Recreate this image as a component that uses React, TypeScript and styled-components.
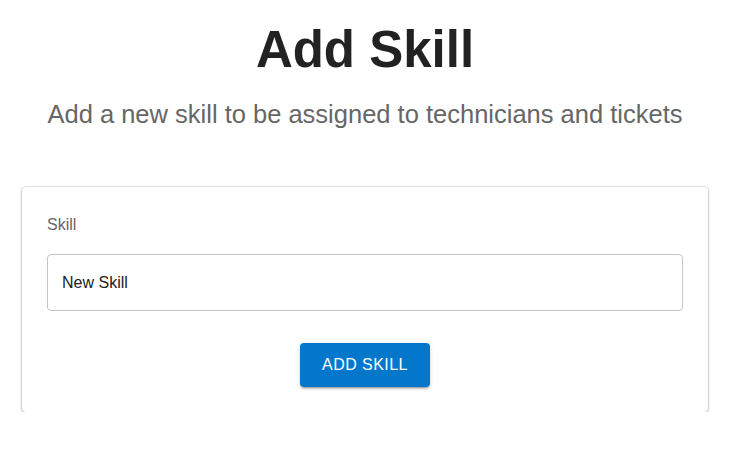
import React, { useState } from 'react';
import styled, { createGlobalStyle } from 'styled-components';

const GlobalStyle = createGlobalStyle`
  body {
    margin: 0;
    background: #ffffff;
    font-family: 'Liberation Sans', Arial, sans-serif;
  }
`;

const Page = styled.main`
  width: 730px;
  padding-top: 22px;
  display: flex;
  flex-direction: column;
  align-items: center;
`;

const Title = styled.h1`
  margin: 0;
  font-size: 51px;
  line-height: 56px;
  font-weight: 700;
  color: #222222;
`;

const Subtitle = styled.p`
  margin: 20px 0 0;
  font-size: 25.5px;
  line-height: 32px;
  color: #666666;
`;

const Card = styled.section`
  box-sizing: border-box;
  width: 686px;
  margin-top: 57px;
  padding: 28px 25px 25px;
  background: #ffffff;
  border-radius: 4px;
  box-shadow: 0 1px 3px 0 rgba(0, 0, 0, 0.28), 0 0 2px 0 rgba(0, 0, 0, 0.14),
    0 0 0 1px rgba(0, 0, 0, 0.04);
  display: flex;
  flex-direction: column;
`;

const Label = styled.label`
  font-size: 16px;
  line-height: 20px;
  color: #666666;
`;

const Input = styled.input`
  box-sizing: border-box;
  margin-top: 19px;
  width: 100%;
  height: 57px;
  padding: 0 14px;
  border: 1px solid #c4c4c4;
  border-radius: 4px;
  font-family: inherit;
  font-size: 16px;
  color: #222222;
  outline: none;
`;

const Actions = styled.div`
  margin-top: 32px;
  display: flex;
  justify-content: center;
`;

const Button = styled.button`
  height: 44px;
  padding: 0 22px;
  border: none;
  border-radius: 4px;
  background: #0277cc;
  color: #ffffff;
  font-family: inherit;
  font-size: 16px;
  letter-spacing: 0.45px;
  text-transform: uppercase;
  box-shadow: 0 3px 1px -2px rgba(0, 0, 0, 0.2), 0 2px 2px 0 rgba(0, 0, 0, 0.14),
    0 1px 5px 0 rgba(0, 0, 0, 0.12);
  cursor: pointer;
`;

const App = () => {
  const [skill, setSkill] = useState('New Skill');

  return (
    <>
      <GlobalStyle />
      <Page>
        <Title>Add Skill</Title>
        <Subtitle>Add a new skill to be assigned to technicians and tickets</Subtitle>
        <Card>
          <Label htmlFor="skill">Skill</Label>
          <Input id="skill" value={skill} onChange={(e) => setSkill(e.target.value)} />
          <Actions>
            <Button type="button">Add Skill</Button>
          </Actions>
        </Card>
      </Page>
    </>
  );
};

export default App;
